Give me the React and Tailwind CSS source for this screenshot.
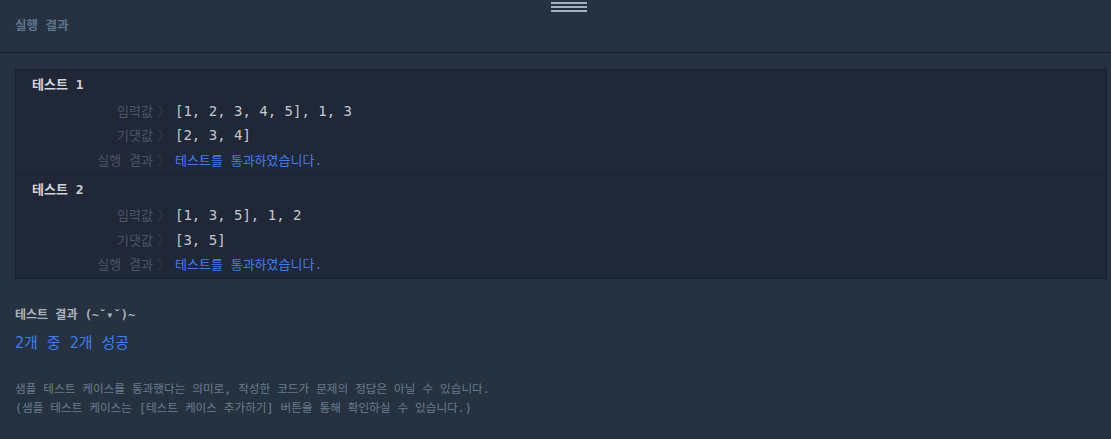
const mono = {
  fontFamily: '"DejaVu Sans Mono", "Noto Sans CJK KR", monospace',
};

const tests = [
  { id: 1, input: "[1, 2, 3, 4, 5], 1, 3", expected: "[2, 3, 4]" },
  { id: 2, input: "[1, 3, 5], 1, 2", expected: "[3, 5]" },
];

function Row({ label, children }) {
  return (
    <div className="flex items-center h-[24.5px]">
      <span className="w-[137px] text-right text-[13px] text-[#4b5666]">{label}</span>
      <span className="w-[22px] text-center text-[13px] text-[#343f4e]">〉</span>
      {children}
    </div>
  );
}

function TestCase({ test, last }) {
  return (
    <div className={`pt-[5px] pb-[1px] ${last ? "" : "border-b border-[#172030]"}`}>
      <div className="pl-[16px] h-[20px] flex items-center text-[13px] font-bold text-[#cfd4da]">
        테스트 {test.id}
      </div>
      <div className="mt-[4px]">
        <Row label="입력값">
          <span className="text-[14px] text-[#c3c9d0]">{test.input}</span>
        </Row>
        <Row label="기댓값">
          <span className="text-[14px] text-[#c3c9d0]">{test.expected}</span>
        </Row>
        <Row label="실행 결과">
          <span className="text-[13px] text-[#3f7ef0]">테스트를 통과하였습니다.</span>
        </Row>
      </div>
    </div>
  );
}

export default function App() {
  return (
    <div className="w-[1111px] h-[439px] bg-[#263240] overflow-hidden" style={mono}>
      <div className="relative h-[53px] border-b border-[#172030] flex items-center px-[15px]">
        <span className="text-[12.5px] font-bold text-[#5d7690]">실행 결과</span>
        <div className="absolute left-[551px] top-[2px] flex flex-col gap-[2px]">
          <div className="w-[36px] h-[2px] bg-[#a3b0bd]" />
          <div className="w-[36px] h-[2px] bg-[#a3b0bd]" />
          <div className="w-[36px] h-[2px] bg-[#a3b0bd]" />
        </div>
      </div>
      <div className="px-[15px] pt-[16px]">
        <div className="w-[1092px] bg-[#202737] border border-[#172030]">
          {tests.map((t, i) => (
            <TestCase key={t.id} test={t} last={i === tests.length - 1} />
          ))}
        </div>
        <div className="mt-[27px] text-[12px] font-bold text-[#aab5c1]">테스트 결과 (~˘▾˘)~</div>
        <div className="mt-[8px] text-[15px] text-[#3f7ef0]">2개 중 2개 성공</div>
        <div className="mt-[25px] text-[11.6px] leading-[19px] text-[#6a7d90]">
          <div>샘플 테스트 케이스를 통과했다는 의미로, 작성한 코드가 문제의 정답은 아닐 수 있습니다.</div>
          <div>(샘플 테스트 케이스는 [테스트 케이스 추가하기] 버튼을 통해 확인하실 수 있습니다.)</div>
        </div>
      </div>
    </div>
  );
}
